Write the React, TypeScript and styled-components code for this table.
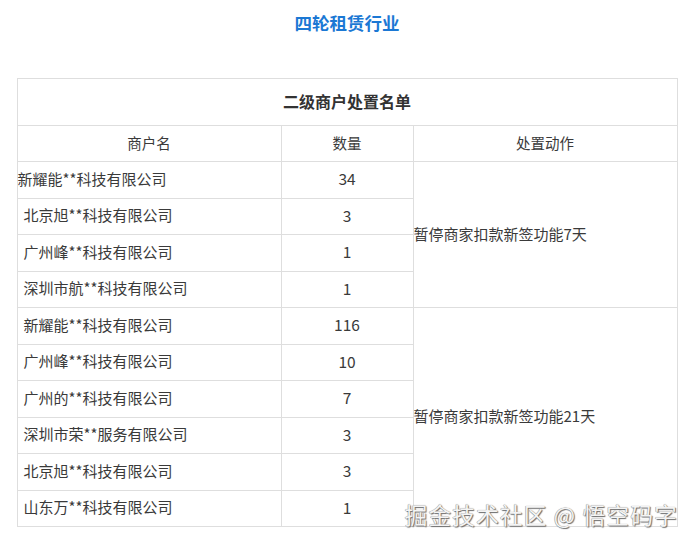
import React from "react";
import styled, { createGlobalStyle } from "styled-components";

const GlobalStyle = createGlobalStyle`
  html, body {
    margin: 0;
    padding: 0;
    background: #ffffff;
  }
  body {
    font-family: "Noto Sans CJK SC", "Noto Sans", sans-serif;
    color: #333333;
  }
`;

const Page = styled.div`
  position: relative;
  width: 694px;
  height: 544px;
  overflow: hidden;
  padding-top: 11px;
  box-sizing: border-box;
`;

const Title = styled.h2`
  margin: 0;
  text-align: center;
  font-size: 17.5px;
  line-height: 24px;
  font-weight: 700;
  color: #1b78d4;
`;

const Table = styled.table`
  margin: 43px auto 0;
  width: 661px;
  border-collapse: collapse;
  table-layout: fixed;
  font-size: 15px;
  color: #3a3a3a;
`;

const CaptionCell = styled.td`
  height: 43px;
  border: 1px solid #dedede;
  text-align: center;
  font-size: 16px;
  font-weight: 700;
  color: #333333;
  padding: 0 0 3px;
`;

const HeadCell = styled.td`
  height: 32px;
  border: 1px solid #dedede;
  text-align: center;
  font-size: 14.5px;
  color: #3a3a3a;
  padding: 0 0 3px;
`;

const Row = styled.tr`
  height: 36.5px;
`;

const NameCell = styled.td<{ $flush?: boolean }>`
  border: 1px solid #dedede;
  padding: 0 ${(p) => (p.$flush ? "0" : "6px")} 3px;
  text-align: left;
  white-space: nowrap;
`;

const CountCell = styled.td`
  border: 1px solid #dedede;
  padding: 0 0 3px;
  text-align: center;
  font-size: 15.5px;
`;

const ActionCell = styled.td`
  border: 1px solid #dedede;
  padding: 0 0 3px;
  text-align: left;
  white-space: nowrap;
`;

const Watermark = styled.div`
  position: absolute;
  right: 16px;
  bottom: 17px;
  font-size: 22.5px;
  line-height: 26px;
  letter-spacing: 1.3px;
  color: #f4f4f4;
  white-space: nowrap;
  text-shadow: 1px 1px 1px #6a6a6a, -0.5px -0.5px 0 #a8a8a8, 0 0 1px #8a8a8a;
`;

type Item = { name: string; count: number };

const groups: { action: string; items: Item[] }[] = [
  {
    action: "暂停商家扣款新签功能7天",
    items: [
      { name: "新耀能**科技有限公司", count: 34 },
      { name: "北京旭**科技有限公司", count: 3 },
      { name: "广州峰**科技有限公司", count: 1 },
      { name: "深圳市航**科技有限公司", count: 1 },
    ],
  },
  {
    action: "暂停商家扣款新签功能21天",
    items: [
      { name: "新耀能**科技有限公司", count: 116 },
      { name: "广州峰**科技有限公司", count: 10 },
      { name: "广州的**科技有限公司", count: 7 },
      { name: "深圳市荣**服务有限公司", count: 3 },
      { name: "北京旭**科技有限公司", count: 3 },
      { name: "山东万**科技有限公司", count: 1 },
    ],
  },
];

export default function App() {
  return (
    <Page>
      <GlobalStyle />
      <Title>四轮租赁行业</Title>
      <Table>
        <colgroup>
          <col style={{ width: "40%" }} />
          <col style={{ width: "20%" }} />
          <col style={{ width: "40%" }} />
        </colgroup>
        <tbody>
          <tr>
            <CaptionCell colSpan={3}>二级商户处置名单</CaptionCell>
          </tr>
          <tr>
            <HeadCell>商户名</HeadCell>
            <HeadCell>数量</HeadCell>
            <HeadCell>处置动作</HeadCell>
          </tr>
          {groups.map((g, gi) =>
            g.items.map((it, i) => (
              <Row key={`${gi}-${i}`}>
                <NameCell $flush={gi === 0 && i === 0}>{it.name}</NameCell>
                <CountCell>{it.count}</CountCell>
                {i === 0 && (
                  <ActionCell rowSpan={g.items.length}>{g.action}</ActionCell>
                )}
              </Row>
            ))
          )}
        </tbody>
      </Table>
      <Watermark>掘金技术社区 @ 悟空码字</Watermark>
    </Page>
  );
}
